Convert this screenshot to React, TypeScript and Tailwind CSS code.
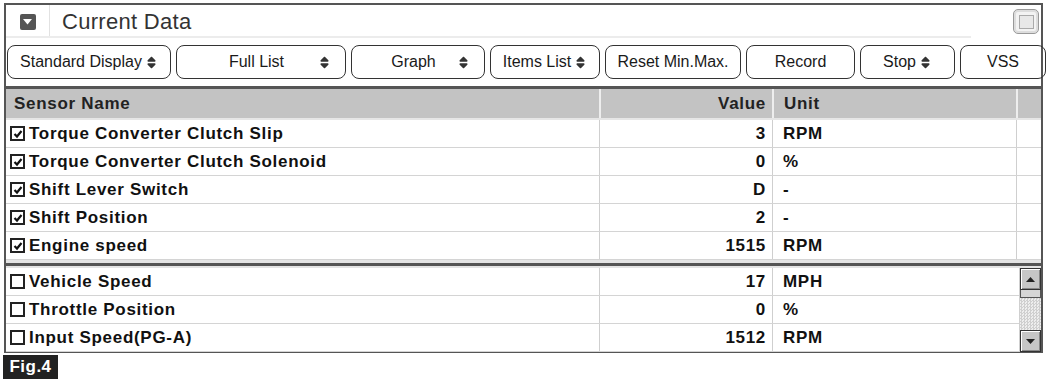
import { FaSort } from "react-icons/fa6";

type R = { name: string; value: string; unit: string; on: boolean };

const top: R[] = [
  { name: "Torque Converter Clutch Slip", value: "3", unit: "RPM", on: true },
  { name: "Torque Converter Clutch Solenoid", value: "0", unit: "%", on: true },
  { name: "Shift Lever Switch", value: "D", unit: "-", on: true },
  { name: "Shift Position", value: "2", unit: "-", on: true },
  { name: "Engine speed", value: "1515", unit: "RPM", on: true },
];

const bottom: R[] = [
  { name: "Vehicle Speed", value: "17", unit: "MPH", on: false },
  { name: "Throttle Position", value: "0", unit: "%", on: false },
  { name: "Input Speed(PG-A)", value: "1512", unit: "RPM", on: false },
];

const buttons = [
  { label: "Standard Display", w: "w-[164px]", sort: true, between: false },
  { label: "Full List", w: "w-[170px]", sort: true, between: true },
  { label: "Graph", w: "w-[134px]", sort: true, between: true },
  { label: "Items List", w: "w-[110px]", sort: true, between: false },
  { label: "Reset Min.Max.", w: "w-[136px]", sort: false, between: false },
  { label: "Record", w: "w-[109px]", sort: false, between: false },
  { label: "Stop", w: "w-[95px]", sort: true, between: false },
  { label: "VSS", w: "w-[86px]", sort: false, between: false },
];

function Check({ on }: { on: boolean }) {
  return (
    <span className="w-[15px] h-[15px] border-2 border-[#222] flex items-center justify-center mr-[4px] shrink-0">
      {on && (
        <svg width="10" height="10" viewBox="0 0 10 10">
          <path d="M1.5 5 L4 7.5 L8.5 2" stroke="#111" strokeWidth="2.2" fill="none" />
        </svg>
      )}
    </span>
  );
}

function Cells({ r }: { r: R }) {
  return (
    <>
      <div className="flex items-center pl-[4px]">
        <Check on={r.on} />
        {r.name}
      </div>
      <div className="flex items-center justify-end pr-[6px] border-l border-[#cfcfcf]">{r.value}</div>
      <div className="flex items-center pl-[10px] border-l border-[#cfcfcf]">{r.unit}</div>
    </>
  );
}

const rowText = "font-bold text-[17px] text-[#111] tracking-[0.7px]";

function ArrowBtn({ up }: { up: boolean }) {
  return (
    <div className="h-[22px] bg-[#c6c6c6] border border-[#333] shadow-[inset_1px_1px_0_#fff,inset_-1px_-1px_0_#888] flex items-center justify-center">
      <svg width="9" height="5" viewBox="0 0 9 5">
        <path d={up ? "M0 5 H9 L4.5 0 Z" : "M0 0 H9 L4.5 5 Z"} fill="#222" />
      </svg>
    </div>
  );
}

export default function App() {
  return (
    <div className="w-[1050px] h-[382px] bg-white pt-[3px] pl-[4px] font-['Liberation_Sans',Arial,sans-serif]">
      <div className="w-[1039px] border-2 border-[#555] border-b-[1px] flex flex-col">
        <div className="h-[33px] flex items-center relative">
          <div className="w-[44px] h-full flex items-center justify-center border-r border-[#e2e2e2]">
            <span className="w-[16px] h-[16px] bg-[#555] rounded-[2px] flex items-center justify-center">
              <svg width="9" height="6" viewBox="0 0 9 6">
                <path d="M0 0 H9 L4.5 5.5 Z" fill="#fff" />
              </svg>
            </span>
          </div>
          <span className="ml-[12px] text-[22px] text-[#333] tracking-[0.3px]">Current Data</span>
          <span className="ml-auto mr-[2px] w-[26px] h-[25px] rounded-[5px] border border-[#999] bg-[#f3f3f3] flex items-center justify-center shadow-[inset_0_0_0_2px_#ddd]">
            <span className="w-[15px] h-[14px] border border-[#aaa] bg-[#e8e8e8]" />
          </span>
          <div className="absolute left-[0px] right-[70px] bottom-0 h-[2px] bg-[#ececec]" />
        </div>
        <div className="h-[48px] flex items-center gap-[5px] pl-[1px] pr-[1px]">
          {buttons.map((b) => (
            <div
              key={b.label}
              className={`${b.w} h-[34px] shrink-0 rounded-[8px] border-[1.5px] border-[#333] flex items-center text-[16px] text-[#1a1a1a] ${
                b.between ? "justify-between pl-[8px] pr-[14px]" : "justify-center"
              }`}
            >
              {b.between && <span className="w-[10px]" />}
              <span>{b.label}</span>
              {b.sort && <FaSort className={`text-[13px] text-[#333] ${b.between ? "" : "ml-[3px]"}`} />}
            </div>
          ))}
        </div>
        <div className="border-t-[3px] border-[#555]">
          <div className="grid grid-cols-[593px_173px_244px_1fr] h-[31px] bg-[#c3c3c3] font-bold text-[17px] text-[#222] tracking-[0.7px] border-b-2 border-[#e6e6e6]">
            <div className="flex items-center pl-[8px]">Sensor Name</div>
            <div className="flex items-center justify-end pr-[6px] border-l-2 border-[#eee]">Value</div>
            <div className="flex items-center pl-[10px] border-l-2 border-[#eee]">Unit</div>
            <div className="border-l-2 border-[#eee]" />
          </div>
          {top.map((r) => (
            <div key={r.name} className={`grid grid-cols-[593px_173px_244px_1fr] h-[28px] border-b border-[#d4d4d4] ${rowText}`}>
              <Cells r={r} />
              <div className="border-l border-[#cfcfcf]" />
            </div>
          ))}
          <div className="h-[3px] bg-[#e4e4e4]" />
          <div className="h-[3px] bg-[#555]" />
          <div className="h-[2px] bg-[#e4e4e4]" />
          <div className="flex">
            <div className="flex-1">
              {bottom.map((r) => (
                <div key={r.name} className={`grid grid-cols-[593px_173px_1fr] h-[28px] border-b border-[#d4d4d4] ${rowText}`}>
                  <Cells r={r} />
                </div>
              ))}
            </div>
            <div className="w-[22px] flex flex-col border-l border-[#cfcfcf]">
              <ArrowBtn up />
              <div className="h-[8px] bg-[#d6d6d6] border-x border-b border-[#555]" />
              <div className="flex-1 bg-[repeating-conic-gradient(#cfcfcf_0_25%,#eeeeee_0_50%)] bg-[length:3px_3px]" />
              <ArrowBtn up={false} />
            </div>
          </div>
        </div>
      </div>
      <div className="mt-[2px] -ml-[1px] w-[55px] h-[24px] bg-[#222] text-white font-bold text-[17px] flex items-center justify-center tracking-[0.5px]">
        Fig.4
      </div>
    </div>
  );
}
